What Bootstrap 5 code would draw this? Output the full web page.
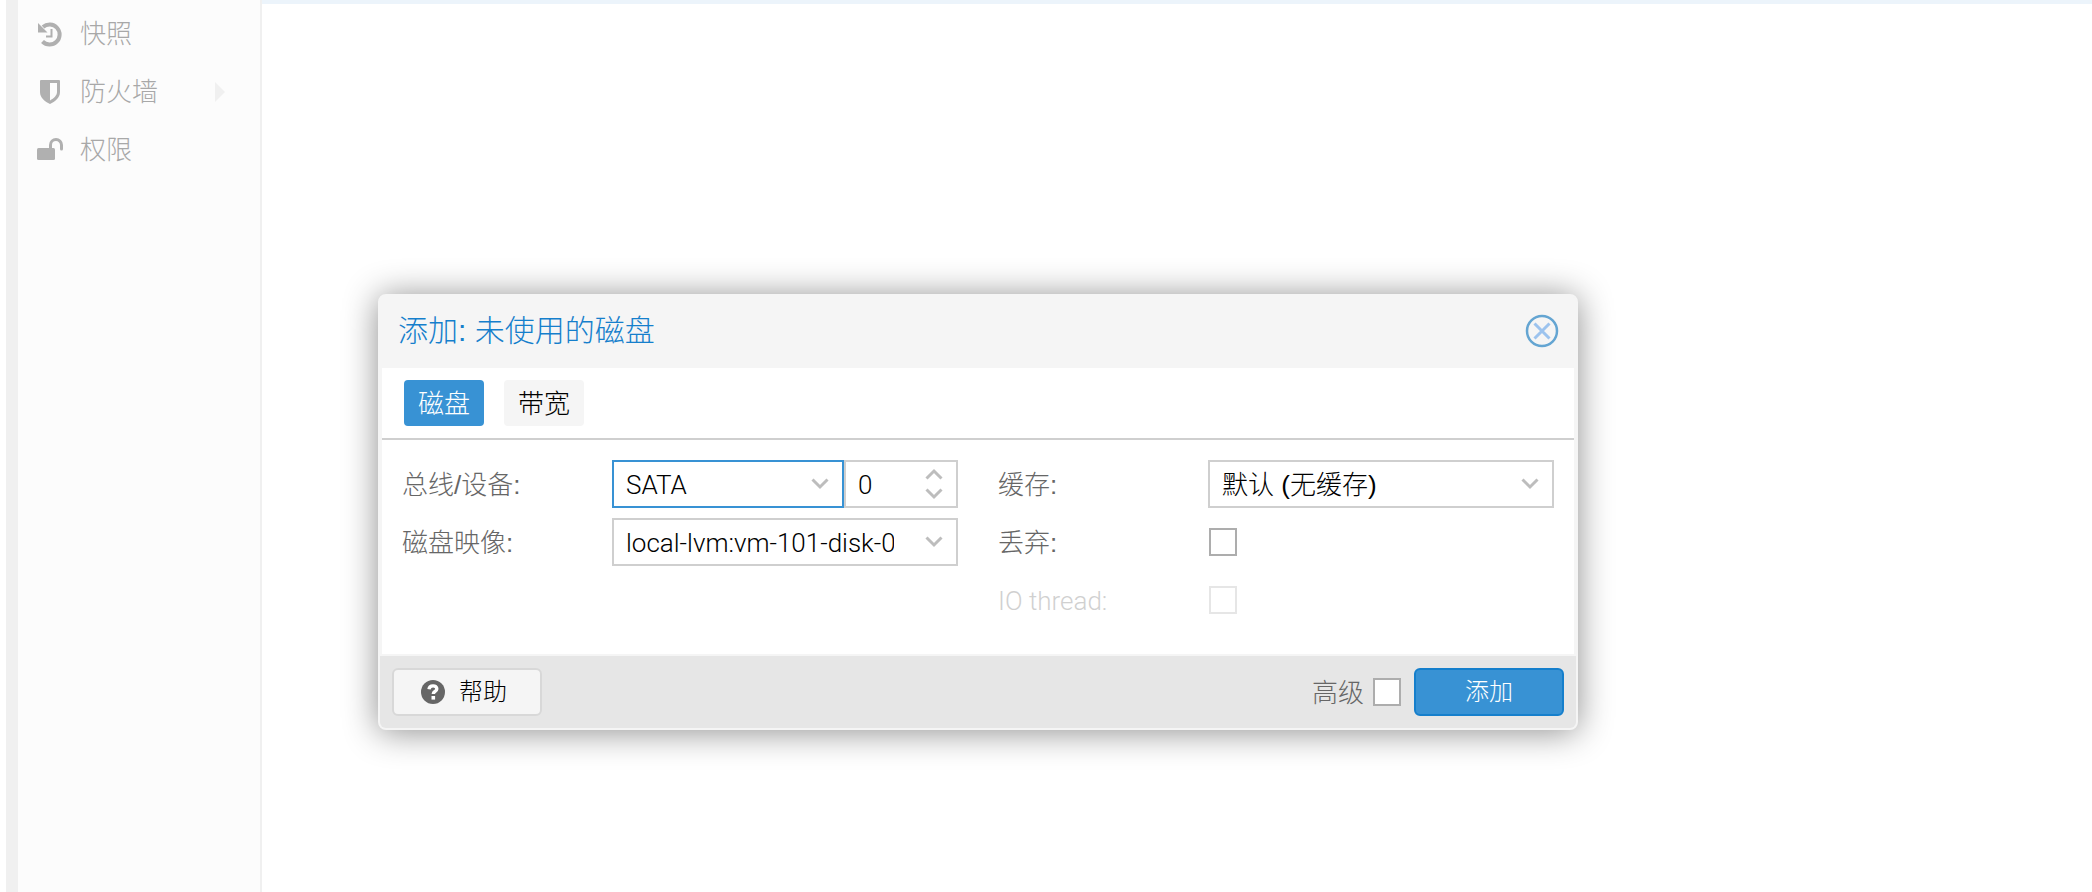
<!DOCTYPE html>
<html lang="zh-CN">
<head>
<meta charset="utf-8">
<meta name="viewport" content="width=device-width, initial-scale=1">
<title>添加: 未使用的磁盘</title>
<link href="https://cdn.jsdelivr.net/npm/bootstrap@5.3.0/dist/css/bootstrap.min.css" rel="stylesheet">
<style>
  :root { --accent: #3892d4; --accent-dark: #157fcc; --line: #cfcfcf; --panel: #f5f5f5; }
  body { font-family: "Liberation Sans", "Noto Sans CJK SC", sans-serif; font-weight: 200; font-size: 26px; line-height: 32px; color: #000; background: #fff; overflow: hidden; }
  .side-menu { width: 256px; margin-left: 6px; padding-top: 5px; border-left: 12px solid #f0f0f0; border-right: 2px solid #f0f0f0; background: #fcfcfc; }
  .side-menu a { height: 58px; padding: 0 35px 0 18px; color: #a8a8a8; text-decoration: none; }
  .side-menu svg { width: 28px; height: 28px; margin-right: 16px; }
  .side-menu .arrow { width: 0; height: 0; margin-left: auto; border: 10px solid transparent; border-left-color: #f0f0f0; border-right: 0; }
  .main-area { border-top: 4px solid #ecf4fb; }
  .dialog-window { position: absolute; left: 378px; top: 294px; width: 1200px; border-radius: 8px; background: var(--panel); border: 2px solid var(--panel); box-shadow: 0 2px 34px rgba(0,0,0,.45); }
  .dialog-head { height: 72px; padding: 0 17px 2px 18px; }
  .dialog-head h1 { font-size: 30px; line-height: 36px; font-weight: 200; color: var(--accent-dark); }
  .close-btn { width: 34px; height: 34px; }
  .dialog-main { background: #fff; margin: 0 2px; }
  .tab-strip { padding: 12px 22px; gap: 20px; border-bottom: 2px solid var(--line); }
  .tab-strip button { width: 80px; height: 46px; border: 0; border-radius: 4px; background: var(--panel); color: #000; font-weight: 200; padding: 2px 0 0; }
  .tab-strip button.active { background: var(--accent); color: #fff; }
  .form-cols { padding: 20px 20px 30px; column-gap: 40px; }
  .form-cols > div { flex: 1 1 0; min-width: 0; row-gap: 10px; }
  .field-row { height: 48px; }
  .field-row > label { width: 210px; flex: none; color: #666; padding-top: 2px; }
  .field-box { appearance: none; -webkit-appearance: none; -moz-appearance: textfield; height: 48px; min-width: 0; border: 2px solid var(--line); border-radius: 0; padding: 2px 62px 0 12px; color: #000; font-weight: 300; outline: 0; background: #fff no-repeat right 12px center; }
  .latin-text { font-family: "Roboto", "Noto Sans CJK SC", sans-serif; font-weight: 300; }
  .field-box::-webkit-inner-spin-button { -webkit-appearance: none; }
  select.field-box { background-image: url("data:image/svg+xml,%3Csvg xmlns='http://www.w3.org/2000/svg' width='20' height='20'%3E%3Cpath d='M2.500 5.500l7.500 7.500 7.500-7.500' fill='none' stroke='%23bdbdbd' stroke-width='3'/%3E%3C/svg%3E"); }
  .spin-box { width: 114px; flex: none; padding-right: 40px; background-image: url("data:image/svg+xml,%3Csvg xmlns='http://www.w3.org/2000/svg' width='20' height='40'%3E%3Cpath d='M2.500 14.500l7.500-7.500 7.500 7.500M2.500 25.500l7.500 7.500 7.500-7.500' fill='none' stroke='%23bdbdbd' stroke-width='3'/%3E%3C/svg%3E"); }
  #cache { font-weight: 200; }
  .bus-box { border-color: var(--accent); }
  .tick { appearance: none; -webkit-appearance: none; width: 28px; height: 28px; margin: 0; border: 2px solid #adadad; outline: 0; background: #fff; }
  .field-row .tick { margin-left: 1px; }
  .dimmed { opacity: .3; }
  .dialog-foot { height: 74px; padding: 0 12px; background: #e6e6e6; border-top: 2px solid var(--panel); border-radius: 0 0 6px 6px; }
  .dialog-foot button { width: 150px; height: 48px; border-radius: 6px; font-size: 24px; font-weight: 200; padding: 0; }
  .dialog-foot .help-btn { padding-left: 27px; background: var(--panel); border: 2px solid #d8d8d8; color: #000; gap: 14px; }
  .dialog-foot .add-btn { background: var(--accent); border: 2px solid var(--accent-dark); color: #fff; margin-left: 13px; }
  .dialog-foot label { color: #666; margin-right: 9px; padding-top: 2px; }
</style>
</head>
<body>
<div class="d-flex vh-100">
  <nav class="side-menu d-flex flex-column flex-shrink-0">
    <a href="#" class="d-flex align-items-center"><svg viewBox="0 0 28 28"><path d="M7 7A10 10 0 1 1 6.500 21.500" fill="none" stroke="#b0b0b0" stroke-width="4"/><path d="M2 3v9.500h9.500z" fill="#b0b0b0"/><path d="M15.500 9v7.500H10" fill="none" stroke="#b0b0b0" stroke-width="2"/></svg>快照</a>
    <a href="#" class="d-flex align-items-center"><svg viewBox="0 0 28 28"><path fill="#b0b0b0" fill-rule="evenodd" d="M5 2h18q1 0 1 1v11c0 6-5 9.500-10 12C9 23.500 4 20 4 14V3q0-1 1-1zm9 3v17.500c4-2.300 7-5 7-8.500V5z"/></svg>防火墙<span class="arrow"></span></a>
    <a href="#" class="d-flex align-items-center"><svg viewBox="0 0 28 28"><rect x="1" y="12" width="18" height="12" rx="1.500" fill="#b0b0b0"/><path d="M14.500 12.500V9a5.500 5.500 0 0 1 11 0v4" fill="none" stroke="#b0b0b0" stroke-width="3" stroke-linecap="round"/></svg>权限</a>
  </nav>
  <main class="main-area flex-grow-1"></main>
</div>

<section class="dialog-window" role="dialog" aria-labelledby="dlgTitle">
  <header class="dialog-head d-flex align-items-center justify-content-between">
    <h1 id="dlgTitle" class="m-0">添加: 未使用的磁盘</h1>
    <button type="button" class="close-btn btn p-0 border-0 d-flex" aria-label="关闭"><svg width="34" height="34" viewBox="0 0 34 34" fill="none"><circle cx="17" cy="17" r="15" stroke="#64a5d2" stroke-width="2.500"/><path d="M9.500 9.500l15 15m0-15l-15 15" stroke="#9cc3ee" stroke-width="3"/></svg></button>
  </header>
  <div class="dialog-main">
    <div class="tab-strip d-flex">
      <button type="button" class="active">磁盘</button>
      <button type="button">带宽</button>
    </div>
    <form class="form-cols d-flex">
      <div class="d-flex flex-column">
        <div class="field-row d-flex align-items-center">
          <label for="bus">总线/设备:</label>
          <select id="bus" class="field-box latin-text bus-box flex-grow-1"><option>SATA</option></select>
          <input type="number" class="field-box latin-text spin-box" value="0" aria-label="设备编号">
        </div>
        <div class="field-row d-flex align-items-center">
          <label for="image">磁盘映像:</label>
          <select id="image" class="field-box latin-text flex-grow-1"><option>local-lvm:vm-101-disk-0</option></select>
        </div>
      </div>
      <div class="d-flex flex-column">
        <div class="field-row d-flex align-items-center">
          <label for="cache">缓存:</label>
          <select id="cache" class="field-box flex-grow-1"><option>默认 (无缓存)</option></select>
        </div>
        <div class="field-row d-flex align-items-center">
          <label for="discard">丢弃:</label>
          <input id="discard" type="checkbox" class="tick">
        </div>
        <div class="field-row d-flex align-items-center dimmed">
          <label for="iothread" class="latin-text">IO thread:</label>
          <input id="iothread" type="checkbox" class="tick" disabled>
        </div>
      </div>
    </form>
  </div>
  <footer class="dialog-foot d-flex align-items-center">
    <button type="button" class="help-btn d-flex align-items-center me-auto"><svg width="24" height="24" viewBox="0 0 24 24"><circle cx="12" cy="12" r="12" fill="#666"/><path d="M8 9.200C8.500 4.500 16 5 15.800 9c-.1 2.500-3.500 2.500-3.500 5" fill="none" stroke="#fff" stroke-width="3.400"/><rect x="10.500" y="16" width="3.600" height="3.600" fill="#fff"/></svg>帮助</button>
    <label for="advanced">高级</label>
    <input id="advanced" type="checkbox" class="tick">
    <button type="button" class="add-btn">添加</button>
  </footer>
</section>
<script src="https://cdn.jsdelivr.net/npm/bootstrap@5.3.0/dist/js/bootstrap.bundle.min.js"></script>
</body>
</html>
